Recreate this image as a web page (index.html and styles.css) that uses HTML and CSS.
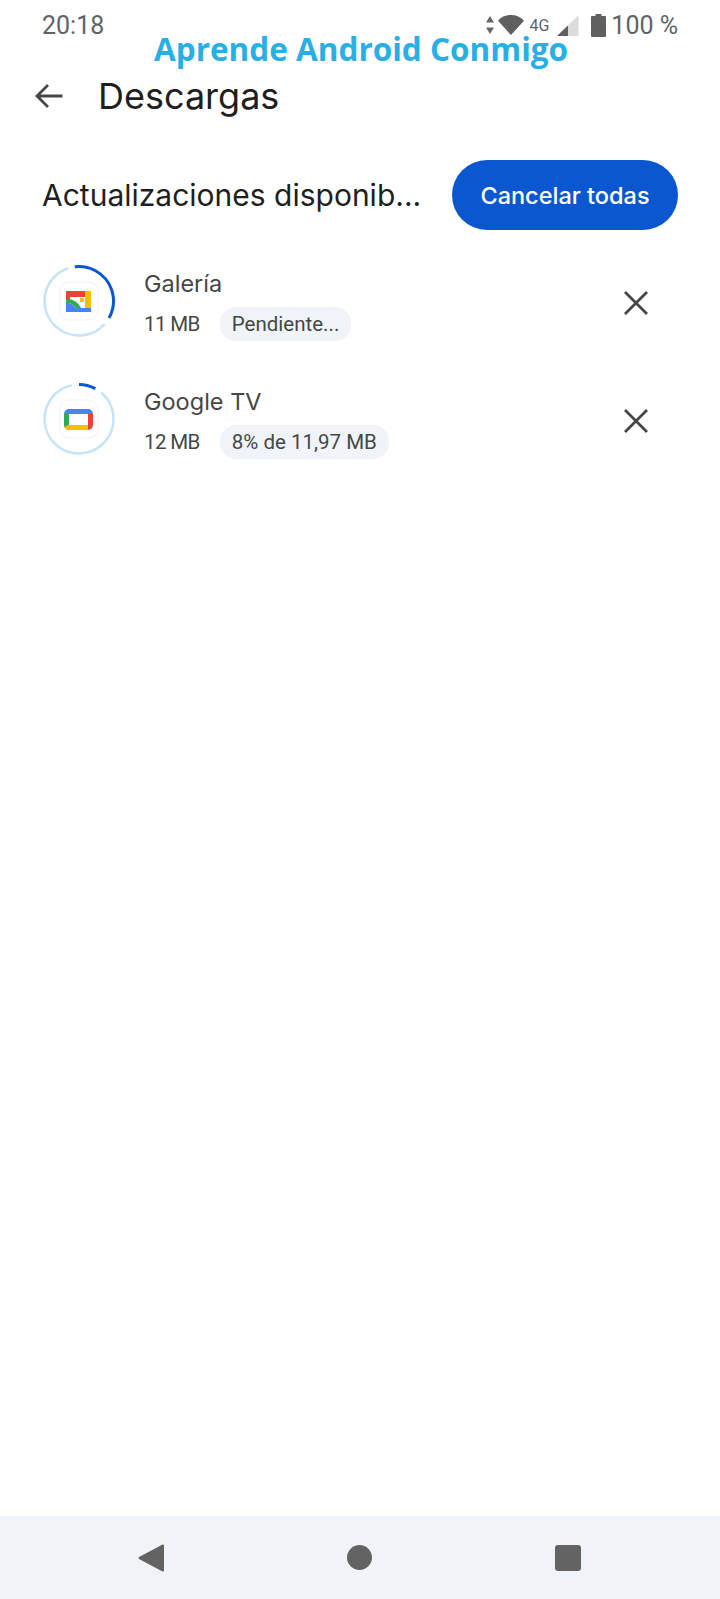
FILE: index.html

```html
<!DOCTYPE html>
<html lang="es">
<head>
    <meta charset="UTF-8">
    <meta name="viewport" content="width=device-width, initial-scale=1.0">
    <title>Descargas</title>
    <link rel="stylesheet" href="styles.css">
</head>
<body>
    <div class="screen">
        <div class="statusBar">
            <span class="clock">20:18</span>
            <div class="statusIcons">
                <svg class="arrows" width="10" height="18" viewBox="0 0 10 18"><path d="M5 0l4 6.500H1zM5 18l4-6.500H1z" fill="#666"/></svg>
                <svg class="wifi" width="26" height="22" viewBox="0 0 27 22"><path d="M0 6.500C3.500 2.500 8 .500 13.500 .500S23.500 2.500 27 6.500L13.500 21.500z" fill="#5f5f5f"/></svg>
                <span class="netType">4G</span>
                <svg class="signal" width="22" height="21" viewBox="0 0 22 21"><path d="M21.500 0v21H0z" fill="#dcdcdc"/><path d="M11 10.500V21H0z" fill="#5f5f5f"/></svg>
                <svg class="battery" width="15" height="23" viewBox="0 0 15 23"><path d="M4.500 0h6v2H14a1 1 0 0 1 1 1v19a1 1 0 0 1-1 1H1a1 1 0 0 1-1-1V3a1 1 0 0 1 1-1h3.500z" fill="#5f5f5f"/></svg>
                <span class="batteryText">100 %</span>
            </div>
        </div>
        <div class="watermark">Aprende Android Conmigo</div>

        <div class="toolbar">
            <svg class="backArrow" width="30" height="26" viewBox="0 0 30 26"><path d="M28.500 13H3M14 2L3 13l11 11" fill="none" stroke="#444746" stroke-width="2.800"/></svg>
            <h1>Descargas</h1>
        </div>

        <div class="sectionHeader">
            <h2>Actualizaciones disponib...</h2>
            <button class="cancelAll">Cancelar todas</button>
        </div>

        <div class="appRow">
            <div class="appIcon">
                <svg width="74" height="74" viewBox="0 0 74 74">
                    <circle cx="37" cy="37" r="34.500" fill="none" stroke="#c6e4f8" stroke-width="2.500" stroke-dasharray="126 91" transform="rotate(42 37 37)"/>
                    <circle cx="37" cy="37" r="34.500" fill="none" stroke="#0b57d0" stroke-width="3" stroke-dasharray="76 141" transform="rotate(-97 37 37)"/>
                    <rect class="iconTile" x="18" y="18" width="38" height="38" rx="9"/>
                    <path d="M24 27h19v6H28v4h-4z" fill="#ea4335"/>
                    <path d="M43 27h6v17h-6z" fill="#fbbc04"/>
                    <rect x="38" y="34" width="4" height="4" fill="#fbbc04"/>
                    <path d="M24 44h25v4H24zM24 39c5 0 8 2 10 5H24z" fill="#4285f4"/>
                    <path d="M24 35c7 0 12 3 15 9h-5c-2-3-5-5-10-5z" fill="#34a853"/>
                </svg>
            </div>
            <div class="appInfo">
                <div class="appName">Galería</div>
                <div class="appMeta">
                    <span class="appSize">11 MB</span>
                    <span class="chip">Pendiente...</span>
                </div>
            </div>
            <svg class="closeIcon" width="26" height="26" viewBox="0 0 26 26"><path d="M2 2l22 22M24 2L2 24" fill="none" stroke="#444746" stroke-width="2.800"/></svg>
        </div>

        <div class="appRow">
            <div class="appIcon">
                <svg width="74" height="74" viewBox="0 0 74 74">
                    <circle cx="37" cy="37" r="34.500" fill="none" stroke="#c6e4f8" stroke-width="2.500" stroke-dasharray="185 32" transform="rotate(-50 37 37)"/>
                    <circle cx="37" cy="37" r="34.500" fill="none" stroke="#0b57d0" stroke-width="3" stroke-dasharray="17 200" transform="rotate(-90 37 37)"/>
                    <rect class="iconTile" x="18" y="18" width="38" height="38" rx="9"/>
                    <path d="M27 27h19a5 5 0 0 1 5 5H22a5 5 0 0 1 5-5z" fill="#4285f4"/>
                    <path d="M22 32h5v11h4v5h-4a5 5 0 0 1-5-5z" fill="#34a853"/>
                    <path d="M26 43h20v5H27a5 5 0 0 1-4.500-3z" fill="#fbbc04"/>
                    <path d="M46 32h5v11a5 5 0 0 1-5 5z" fill="#ea4335"/>
                </svg>
            </div>
            <div class="appInfo">
                <div class="appName">Google TV</div>
                <div class="appMeta">
                    <span class="appSize">12 MB</span>
                    <span class="chip">8% de 11,97 MB</span>
                </div>
            </div>
            <svg class="closeIcon" width="26" height="26" viewBox="0 0 26 26"><path d="M2 2l22 22M24 2L2 24" fill="none" stroke="#444746" stroke-width="2.800"/></svg>
        </div>

        <div class="navBar">
            <svg width="26" height="28" viewBox="0 0 26 28"><path d="M25 1.500v25L1.500 14z" fill="#636363" stroke="#636363" stroke-width="2" stroke-linejoin="round"/></svg>
            <div class="navHome"></div>
            <div class="navRecent"></div>
        </div>
    </div>
</body>
</html>
```

FILE: styles.css

```css
* {
    box-sizing: border-box;
}
body {
    margin: 0;
    background-color: white;
    font-family: 'Roboto', 'Liberation Sans', sans-serif;
}
.screen {
    position: relative;
    display: flex;
    flex-direction: column;
    width: 720px;
    height: 1599px;
    overflow: hidden;
}
.statusBar {
    display: flex;
    justify-content: space-between;
    align-items: center;
    height: 50px;
    padding: 0 42px;
    color: #5f6368;
    font-size: 25px;
}
.statusIcons {
    display: flex;
    align-items: center;
}
.wifi {
    margin-left: 3px;
}
.netType {
    margin-left: 5px;
    font-size: 16px;
}
.signal {
    margin-left: 8px;
}
.battery {
    margin-left: 12px;
}
.batteryText {
    margin-left: 5px;
}
.watermark {
    position: absolute;
    top: 27px;
    left: 154px;
    color: #29aee6;
    font-family: 'Open Sans', sans-serif;
    font-size: 31.500px;
    font-weight: 700;
    white-space: nowrap;
}
.toolbar {
    display: flex;
    align-items: center;
    height: 92px;
    padding-left: 34px;
}
.toolbar h1 {
    margin: 0 0 0 34px;
    color: #1f1f1f;
    font-family: 'Inter', sans-serif;
    font-size: 36px;
    font-weight: 400;
}
.sectionHeader {
    display: flex;
    justify-content: space-between;
    align-items: center;
    margin-top: 18px;
    padding: 0 42px;
}
.sectionHeader h2 {
    margin: 0;
    color: #1f1f1f;
    font-family: 'Inter', sans-serif;
    font-size: 30px;
    font-weight: 400;
}
.cancelAll {
    width: 226px;
    height: 70px;
    border: none;
    border-radius: 35px;
    background-color: #0b57d0;
    color: white;
    font-family: 'Inter', sans-serif;
    font-size: 23.500px;
    font-weight: 500;
}
.appRow {
    display: flex;
    align-items: center;
    height: 118px;
    padding: 0 42px;
}
.sectionHeader + .appRow {
    margin-top: 14px;
}
.appIcon {
    display: flex;
    width: 102px;
    margin-top: -4px;
}
.iconTile {
    fill: white;
    stroke: #f0f1f2;
}
.appInfo {
    flex: 1;
    margin-top: 4px;
}
.appName {
    color: #444746;
    font-family: 'Inter', sans-serif;
    font-size: 23.500px;
}
.appMeta {
    display: flex;
    align-items: center;
    gap: 20px;
    margin-top: 9px;
    color: #444746;
    font-size: 20.500px;
}
.appSize {
    letter-spacing: -0.6px;
}
.chip {
    padding: 5px 12px;
    border-radius: 16px;
    background-color: #f0f4f9;
}
.closeIcon {
    margin-right: 29px;
}
.navBar {
    display: flex;
    justify-content: space-between;
    align-items: center;
    margin-top: auto;
    height: 83px;
    padding: 0 139px 0 138px;
    background-color: #f0f4f9;
}
.navHome {
    width: 25px;
    height: 25px;
    border-radius: 50%;
    background-color: #636363;
}
.navRecent {
    width: 26px;
    height: 26px;
    border-radius: 3px;
    background-color: #636363;
}
```
